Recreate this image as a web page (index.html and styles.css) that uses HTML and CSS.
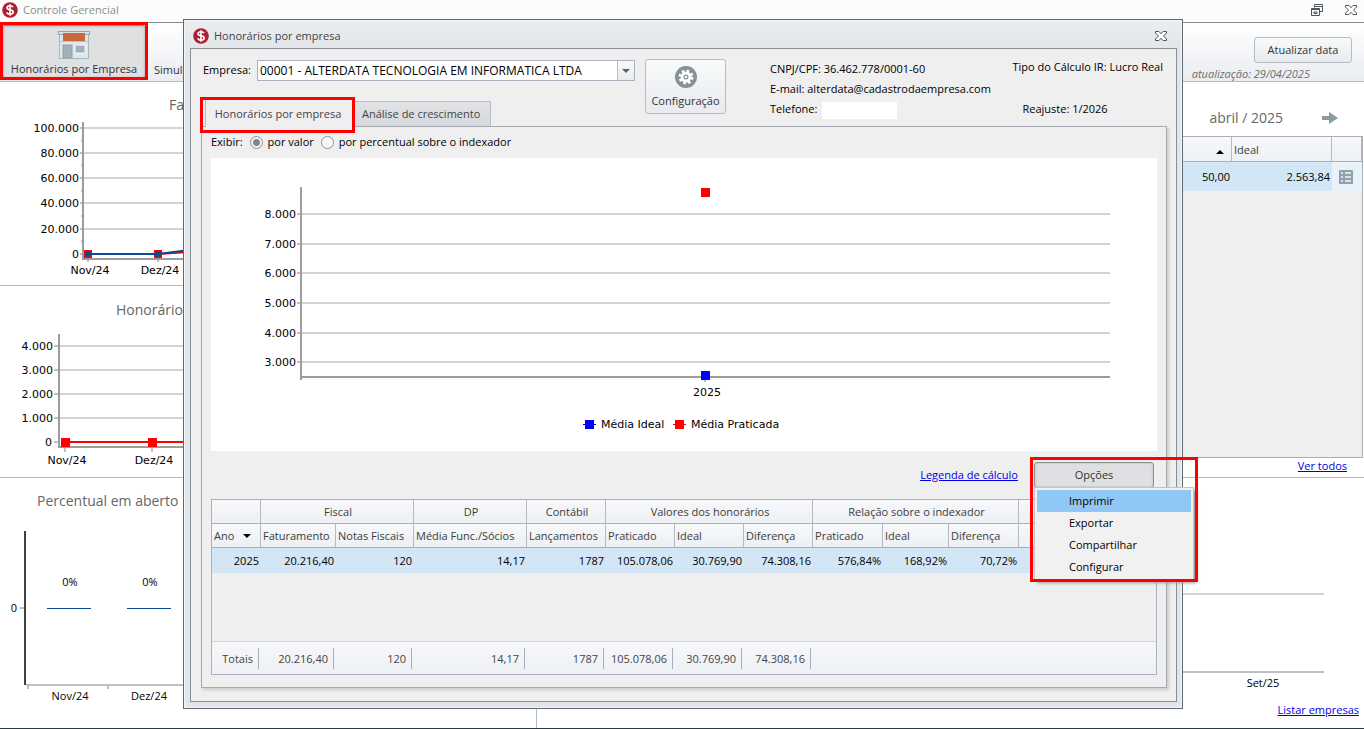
FILE: index.html
```html
<!DOCTYPE html>
<html lang="pt-BR">
<head>
    <meta charset="utf-8" />
    <title>Controle Gerencial</title>
    <link rel="stylesheet" href="styles.css">
</head>
<body>
    <!-- shared icon -->
    <svg class="defs" width="0" height="0">
        <symbol id="money" viewBox="0 0 16 16">
            <circle cx="8" cy="8" r="7.8" fill="#b01e33" />
            <path d="M11 5.2C10.5 4.1 9.500 3.700 8 3.700C6.200 3.700 5 4.500 5 5.800C5 8.700 11.200 7 11.200 10C11.200 11.500 9.800 12.200 8 12.200C6.300 12.200 5.200 11.600 4.700 10.400M8 2.200V13.800" fill="none" stroke="#fff" stroke-width="1.600" />
        </symbol>
        <symbol id="close" viewBox="0 0 12 12">
            <path d="M.5 1.500H4L6 3.700L8 1.500H11.500V3L8.500 6L11.500 9V10.500H8L6 8.300L4 10.500H.5V9L3.500 6L.5 3Z" fill="#fff" stroke="#4e565c" />
        </symbol>
    </svg>

    <div class="app">
        <header class="titlebar">
            <svg class="logo"><use href="#money" /></svg>
            <span>Controle Gerencial</span>
            <div class="winbtns">
                <button type="button" aria-label="Restaurar">
                    <svg width="12" height="12" viewBox="0 0 12 12"><path d="M3.500 3.500V.5H11.500V7.500H8.500M3.500 2.500H11M.5 4.500H8.500V11.500H.5ZM.5 5.500H8.500M3 8H6V9.500H3Z" fill="none" stroke="#4e565c" /></svg>
                </button>
                <button type="button" aria-label="Fechar"><svg width="12" height="12"><use href="#close" /></svg></button>
            </div>
        </header>

        <nav class="toolbar">
            <button type="button" class="toolbtn active">
                <svg width="32" height="28" viewBox="0 0 32 28">
                    <rect x="1.500" y="3" width="29" height="24.500" fill="#dfe8ec" stroke="#a9b8c0" />
                    <rect x=".5" y=".5" width="31" height="3" fill="#d9e2e6" stroke="#94a5ae" />
                    <rect x="5" y="2" width="22" height="8" fill="#c9683c" />
                    <path d="M1 10.500H31" stroke="#b3c1c8" />
                    <rect x="5" y="14" width="9" height="13" fill="#a3b1b9" stroke="#8fa0a9" />
                    <rect x="17" y="14" width="10" height="8" fill="#a3b1b9" stroke="#f4f8fa" />
                </svg>
                <span>Honorários por Empresa</span>
                <i class="mark"></i>
            </button>
            <button type="button" class="toolbtn">Simul</button>
            <div class="update">
                <button type="button" class="btn">Atualizar data</button>
                <em>atualização: 29/04/2025</em>
            </div>
        </nav>

        <main class="panels">
            <div class="left">
                <section class="panel billing">
                    <h2>Fa</h2>
                    <svg class="chart" width="300" height="160" viewBox="0 120 300 160">
                        <path class="grid" d="M84 128H300M84 153H300M84 178H300M84 203H300M84 229H300" />
                        <path class="tick" d="M80 128H84M80 153H84M80 178H84M80 203H84M80 229H84M80 254H84M81 140.500H84M81 165.500H84M81 190.500H84M81 216H84M81 241.500H84M88 259V262M158 259V262" />
                        <path class="axis" d="M83 122V259H300" />
                        <g class="ylabels">
                            <text x="79" y="132">100.000</text>
                            <text x="79" y="157">80.000</text>
                            <text x="79" y="182">60.000</text>
                            <text x="79" y="207">40.000</text>
                            <text x="79" y="233">20.000</text>
                            <text x="79" y="258">0</text>
                        </g>
                        <path d="M88 254H158L300 245" fill="none" stroke="#f00" stroke-width="2" />
                        <path d="M84 250H92V258H84ZM154 250H162V258H154Z" fill="#f00" />
                        <path d="M88 254H158L300 236" fill="none" stroke="#084d92" stroke-width="2" />
                        <circle cx="88" cy="254" r="3" fill="#084d92" />
                        <circle cx="158" cy="254" r="3" fill="#084d92" />
                        <g class="xlabels">
                            <text x="90" y="274">Nov/24</text>
                            <text x="160" y="274">Dez/24</text>
                        </g>
                    </svg>
                </section>
                <section class="panel fees">
                    <h2>Honorário</h2>
                    <svg class="chart" width="300" height="142" viewBox="0 330 300 142">
                        <path class="grid" d="M60 346H300M60 370H300M60 394H300M60 418H300" />
                        <path class="tick" d="M54 346H59M54 370H59M54 394H59M54 418H59M54 442H59M65 447V452M152 447V452" />
                        <path class="axis" d="M59 334V447H300" />
                        <g class="ylabels">
                            <text x="53" y="350">4.000</text>
                            <text x="53" y="374">3.000</text>
                            <text x="53" y="398">2.000</text>
                            <text x="53" y="422">1.000</text>
                            <text x="52" y="446">0</text>
                        </g>
                        <path d="M65 442H300" stroke="#f00" stroke-width="2" />
                        <path d="M61 438H70V447H61ZM148 438H157V447H148Z" fill="#f00" />
                        <g class="xlabels">
                            <text x="67" y="464">Nov/24</text>
                            <text x="154" y="464">Dez/24</text>
                        </g>
                    </svg>
                </section>
                <section class="panel open">
                    <h2>Percentual em aberto</h2>
                    <svg class="chart" width="300" height="190" viewBox="0 520 300 190">
                        <path d="M25 531V685" stroke="#404040" stroke-width="2" />
                        <path d="M26 685H300M28 686V689M108 686V689M20 608H24" stroke="#bfbfbf" stroke-width="2" />
                        <path d="M47 608.500H91M127 608.500H171" stroke="#084d92" />
                        <g class="values">
                            <text x="14" y="612">0</text>
                            <text x="70" y="586">0%</text>
                            <text x="150" y="586">0%</text>
                            <text x="70" y="700">Nov/24</text>
                            <text x="149" y="700">Dez/24</text>
                        </g>
                    </svg>
                </section>
            </div>

            <div class="right">
                <section class="month">
                    <div class="monthnav">
                        <h2>abril / 2025</h2>
                        <button type="button" aria-label="Próximo mês">
                            <svg width="18" height="14" viewBox="0 0 18 14"><path d="M1 5H8V1L17 7L8 13V9H1Z" fill="#8a9ba1" /></svg>
                        </button>
                    </div>
                    <div class="monthgrid">
                        <table>
                            <colgroup><col><col class="c100"><col class="c30"></colgroup>
                            <thead>
                                <tr><th class="sort"><i class="up"></i></th><th>Ideal</th><th></th></tr>
                            </thead>
                            <tbody>
                                <tr>
                                    <td>50,00</td>
                                    <td>2.563,84</td>
                                    <td class="act">
                                        <button type="button" aria-label="Detalhes">
                                            <svg width="14" height="14" viewBox="0 0 14 14"><rect width="14" height="14" rx="1" fill="#8fa1ab" /><path d="M2 3H4M2 7H4M2 11H4M6 3H12M6 7H12M6 11H12" stroke="#f4f8fb" stroke-width="1.500" /></svg>
                                        </button>
                                    </td>
                                </tr>
                            </tbody>
                        </table>
                    </div>
                    <a href="#" class="all">Ver todos</a>
                </section>
                <section class="forecast">
                    <svg class="chart" width="200" height="120" viewBox="1164 580 200 120">
                        <path d="M1164 594H1324" stroke="#d3d3d3" stroke-width="2" />
                        <path d="M1164 672H1324" stroke="#bfbfbf" stroke-width="2" />
                        <g class="values"><text x="1263" y="687">Set/25</text></g>
                    </svg>
                    <a href="#" class="list">Listar empresas</a>
                </section>
            </div>
        </main>
    </div>

    <!-- window: Honorários por empresa -->
    <div class="dialog" role="dialog" aria-labelledby="dlgtitle">
        <header class="dlghead">
            <svg class="logo"><use href="#money" /></svg>
            <span id="dlgtitle">Honorários por empresa</span>
            <button type="button" aria-label="Fechar"><svg width="12" height="12"><use href="#close" /></svg></button>
        </header>
        <div class="dlgbody">
            <div class="company">
                <label for="empresa">Empresa:</label>
                <div class="combo">
                    <select id="empresa"><option>00001 - ALTERDATA TECNOLOGIA EM INFORMATICA LTDA</option></select>
                    <span class="arrow"><i class="down"></i></span>
                </div>
                <button type="button" class="btn config">
                    <svg width="22" height="22" viewBox="0 0 22 22">
                        <circle cx="11" cy="11" r="11" fill="#829299" />
                        <circle cx="11" cy="11" r="6" fill="none" stroke="#fff" stroke-width="3" stroke-dasharray="2.400 2.312" />
                        <circle cx="11" cy="11" r="4" fill="none" stroke="#fff" stroke-width="3" />
                        <circle cx="11" cy="11" r="1.200" fill="#fff" />
                    </svg>
                    <span>Configuração</span>
                </button>
                <div class="contact">
                    <p>CNPJ/CPF: 36.462.778/0001-60</p>
                    <p>E-mail: alterdata@cadastrodaempresa.com</p>
                    <p>Telefone: <span class="blank"></span></p>
                </div>
                <div class="tax">
                    <p>Tipo do Cálculo IR: Lucro Real</p>
                    <p class="adjust">Reajuste: 1/2026</p>
                </div>
            </div>

            <div class="tabs" role="tablist">
                <button type="button" role="tab" class="tab selected" aria-selected="true">Honorários por empresa<i class="mark"></i></button>
                <button type="button" role="tab" class="tab">Análise de crescimento</button>
            </div>

            <div class="page">
                <div class="show">
                    <span>Exibir:</span>
                    <input type="radio" name="exibir" id="valor" checked><label for="valor">por valor</label>
                    <input type="radio" name="exibir" id="perc"><label for="perc">por percentual sobre o indexador</label>
                </div>

                <svg class="mainchart" viewBox="211 158 946 293">
                    <path class="grid" d="M302 214H1110M302 244H1110M302 273H1110M302 303H1110M302 333H1110M302 362H1110" />
                    <path class="tick" d="M297 214H301M297 244H301M297 273H301M297 303H301M297 333H301M297 362H301M705 378V382" />
                    <path class="axis" d="M301 187V380M301 377H1110" />
                    <g class="ylabels">
                        <text x="296" y="218">8.000</text>
                        <text x="296" y="248">7.000</text>
                        <text x="296" y="277">6.000</text>
                        <text x="296" y="307">5.000</text>
                        <text x="296" y="337">4.000</text>
                        <text x="296" y="366">3.000</text>
                    </g>
                    <rect x="701" y="188" width="9" height="9" fill="#f00" />
                    <rect x="701" y="371" width="9" height="9" fill="#00f" />
                    <g class="xlabels"><text x="707" y="396">2025</text></g>
                    <path d="M583 424.500H596" stroke="#00f" />
                    <rect x="585" y="420" width="9" height="9" fill="#00f" />
                    <text x="601" y="428">Média Ideal</text>
                    <path d="M673 424.500H686" stroke="#f00" />
                    <rect x="675" y="420" width="9" height="9" fill="#f00" />
                    <text x="691" y="428">Média Praticada</text>
                </svg>

                <div class="actions">
                    <a href="#">Legenda de cálculo</a>
                    <div class="options">
                        <button type="button" class="btn pressed" aria-expanded="true">Opções</button>
                        <div class="menu" role="menu">
                            <button type="button" role="menuitem" class="hover">Imprimir</button>
                            <button type="button" role="menuitem">Exportar</button>
                            <button type="button" role="menuitem">Compartilhar</button>
                            <button type="button" role="menuitem">Configurar</button>
                        </div>
                        <i class="mark"></i>
                    </div>
                </div>

                <table class="fees-table">
                    <colgroup>
                        <col class="c49"><col class="c75"><col class="c78"><col class="c113"><col class="c79">
                        <col class="c69"><col class="c69"><col class="c69"><col class="c70"><col class="c66"><col class="c70"><col>
                    </colgroup>
                    <thead>
                        <tr class="groups">
                            <th></th><th colspan="2">Fiscal</th><th>DP</th><th>Contábil</th>
                            <th colspan="3">Valores dos honorários</th><th colspan="3">Relação sobre o indexador</th><th></th>
                        </tr>
                        <tr>
                            <th>Ano <i class="down big"></i></th><th>Faturamento</th><th>Notas Fiscais</th><th>Média Func./Sócios</th><th>Lançamentos</th>
                            <th>Praticado</th><th>Ideal</th><th>Diferença</th><th>Praticado</th><th>Ideal</th><th>Diferença</th><th></th>
                        </tr>
                    </thead>
                    <tbody>
                        <tr>
                            <td>2025</td><td>20.216,40</td><td>120</td><td>14,17</td><td>1787</td>
                            <td>105.078,06</td><td>30.769,90</td><td>74.308,16</td><td>576,84%</td><td>168,92%</td><td>70,72%</td><td></td>
                        </tr>
                        <tr class="empty"><td colspan="12"></td></tr>
                    </tbody>
                    <tfoot>
                        <tr>
                            <td><span>Totais</span></td><td><span>20.216,40</span></td><td><span>120</span></td><td><span>14,17</span></td><td><span>1787</span></td>
                            <td><span>105.078,06</span></td><td><span>30.769,90</span></td><td><span>74.308,16</span></td><td colspan="4"></td>
                        </tr>
                    </tfoot>
                </table>
            </div>
        </div>
    </div>
</body>
</html>
```

FILE: styles.css
```css
*{
    padding:0;
    margin:0;
    box-sizing:border-box;
}
body{
    position:relative;
    font:11px/16px "Open Sans", "Noto Sans", sans-serif;
    color:#000;
    background-color:#fff;
}
button, select{
    font:inherit;
    color:#333;
    background:none;
    border:none;
}
svg{
    display:block;
}
a{
    color:#0000e6;
}
h2{
    font-weight:normal;
    font-size:14px;
    line-height:20px;
    color:#666;
}
table{
    width:100%;
    table-layout:fixed;
    border-spacing:0;
}
th{
    font-weight:normal;
    text-align:left;
    color:#3c3c3c;
    white-space:nowrap;
    background:linear-gradient(#f7f8fa, #edf0f4);
    border-right:1px solid #b4bac3;
    border-bottom:1px solid #a9afb9;
}
td{
    text-align:right;
    white-space:nowrap;
}
.defs{
    position:absolute;
}
.logo{
    width:16px;
    height:16px;
}

/* red frames drawn over the controls */
.mark{
    position:absolute;
    border:3px solid #f00;
    pointer-events:none;
}

/* small triangles */
.up, .down{
    display:inline-block;
    border:4px solid transparent;
}
.up{
    border-top:none;
    border-bottom-color:#000;
}
.down{
    border-bottom:none;
    border-top-color:#5a636b;
}
.down.big{
    border-top-color:#000;
    margin:0 0 2px 6px;
}

.btn{
    height:26px;
    color:#333;
    background:linear-gradient(#f8fafb, #e8ebef);
    border:1px solid #b6bcc6;
    border-radius:3px;
}
.btn.pressed{
    display:block;
    width:120px;
    background:#dfe0e2;
    border-color:#8b9097;
    box-shadow:inset 0 0 2px #a0a4a9;
}

/* main window */
.app{
    display:flex;
    flex-direction:column;
    min-height:100vh;
    border-bottom:1px solid #2b3a42;
}
.titlebar{
    display:flex;
    align-items:center;
    gap:5px;
    height:23px;
    padding:0 7px 3px 2px;
    color:#8c8c8c;
    background-color:#fcfcfc;
    border-bottom:1px solid #868c93;
}
.winbtns{
    display:flex;
    gap:22px;
    margin-left:auto;
}
.toolbar{
    display:flex;
    height:59px;
    padding:2px 12px 2px 2px;
    background:linear-gradient(#fff, #e9ecf1);
    border-bottom:1px solid #b4b9c2;
}
.toolbtn{
    position:relative;
    display:flex;
    flex-direction:column;
    justify-content:flex-end;
    align-items:center;
    gap:2px;
    padding:0 8px 1px;
    white-space:nowrap;
}
.toolbtn.active{
    width:144px;
    background-color:#dfe0e2;
    border:1px solid #8b9097;
    border-radius:3px;
    box-shadow:inset 0 0 3px #a0a4a9;
}
.toolbtn .mark{
    inset:-4px -3px -2px -3px;
}
.update{
    display:flex;
    flex-direction:column;
    align-items:flex-end;
    gap:3px;
    margin-left:auto;
    padding-top:12px;
    color:#6e6e6e;
}
.update .btn{
    width:98px;
    flex-shrink:0;
}
.update em{
    padding-right:42px;
}
.panels{
    display:flex;
    flex:1;
}
.left{
    display:flex;
    flex-direction:column;
    width:537px;
    border-right:1px solid #b4b9c2;
}
.right{
    display:flex;
    flex-direction:column;
    flex:1;
}
.panel{
    padding-top:13px;
    border-bottom:1px solid #b4b9c2;
}
.panel:last-child{
    border-bottom:none;
}
.billing{
    height:204px;
}
.billing h2{
    padding-left:169px;
}
.billing .chart{
    margin-top:5px;
}
.fees{
    height:192px;
    padding-top:14px;
}
.fees h2{
    padding-left:116px;
}
.fees .chart{
    margin-top:10px;
}
.open h2{
    padding-left:37px;
}
.open .chart{
    margin-top:9px;
}

/* charts */
.chart, .mainchart{
    font:11px "DejaVu Sans", Verdana, sans-serif;
}
.grid{
    stroke:#d3d3d3;
    stroke-width:2px;
}
.tick{
    stroke:#bfbfbf;
    stroke-width:2px;
}
.axis{
    fill:none;
    stroke:#9c9c9c;
    stroke-width:2px;
}
.ylabels{
    text-anchor:end;
}
.xlabels, .values{
    text-anchor:middle;
}
.values{
    font:11px "Open Sans", "Noto Sans", sans-serif;
}

/* month panel */
.month{
    display:flex;
    flex-direction:column;
    height:396px;
    border-bottom:1px solid #b4b9c2;
}
.monthnav{
    display:flex;
    justify-content:flex-end;
    align-items:center;
    gap:38px;
    height:54px;
    padding:17px 25px 0 0;
}
.monthgrid{
    height:322px;
    margin-right:1px;
    background-color:#efefef;
    border:1px solid #a9afb9;
}
.monthgrid th{
    height:25px;
    padding:1px 0 0 2px;
}
.monthgrid .sort{
    text-align:right;
    padding-right:7px;
    line-height:10px;
}
.monthgrid td{
    height:29px;
    padding-right:2px;
    background-color:#d3e6f5;
}
.monthgrid .act{
    background-color:#eaf2f9;
}
.act button{
    display:block;
    margin:0 auto;
}
.all{
    align-self:flex-end;
    margin-right:17px;
}
.forecast{
    display:flex;
    flex:1;
    flex-direction:column;
    align-items:flex-end;
    padding-top:102px;
}
.list{
    margin:2px 5px 0 0;
}

/* dialog */
.dialog{
    position:absolute;
    top:19px;
    left:183px;
    right:181px;
    padding:0 5px 6px 6px;
    background:linear-gradient(#ebedf0, #e2e6e9 30px);
    border:1px solid #60676f;
    box-shadow:inset 0 0 0 1px #f3f5f6;
}
.dlghead{
    display:flex;
    align-items:center;
    gap:5px;
    height:28px;
    padding:4px 10px 0 3px;
    color:#444;
}
.dlghead button{
    margin-left:auto;
}
.dlgbody{
    padding:10px 9px 13px 10px;
    background-color:#efefef;
    border:1px solid #888e96;
}
.company{
    display:flex;
    align-items:flex-start;
    height:57px;
    white-space:nowrap;
}
.company label{
    flex-shrink:0;
    width:56px;
    padding:3px 0 0 2px;
}
.combo{
    position:relative;
    flex-shrink:0;
    width:378px;
    margin-top:1px;
}
.combo select{
    display:block;
    width:100%;
    height:21px;
    padding:0 20px 0 2px;
    font-size:12px;
    color:#000;
    background-color:#fff;
    border:1px solid #aab0bd;
    appearance:none;
}
.combo .arrow{
    position:absolute;
    top:1px;
    right:1px;
    bottom:1px;
    width:17px;
    display:flex;
    justify-content:center;
    align-items:center;
    background:linear-gradient(#f8fafb, #e8ebef);
    border-left:1px solid #b6bcc6;
    pointer-events:none;
}
.config{
    display:flex;
    flex-direction:column;
    flex-shrink:0;
    align-items:center;
    gap:5px;
    width:81px;
    height:55px;
    margin-left:10px;
    padding-top:6px;
}
.contact{
    margin-left:44px;
    line-height:20px;
}
.tax{
    display:flex;
    flex-direction:column;
    gap:26px;
    margin-left:auto;
    padding-right:4px;
}
.tax .adjust{
    padding-left:10px;
}
.blank{
    display:inline-block;
    width:75px;
    height:17px;
    margin-left:2px;
    vertical-align:middle;
    background-color:#fff;
}
.tabs{
    display:flex;
    align-items:flex-end;
    height:10px;
    padding-left:4px;
}
.tab{
    position:relative;
    height:25px;
    padding:0 10px 0 8px;
    color:#444;
    white-space:nowrap;
    background:linear-gradient(#e0e2e6, #d6d9dd);
    border:1px solid #b6bcc6;
    border-bottom:none;
}
.tab.selected{
    z-index:1;
    height:28px;
    width:148px;
    margin-bottom:-1px;
    background:#efefef;
}
.tab .mark{
    inset:-3px -3px -6px -6px;
}
.page{
    padding:7px 9px 12px;
    border:1px solid #a6abb5;
    box-shadow:2px 2px 3px #c8cacd;
}
.show{
    display:flex;
    align-items:center;
    height:16px;
}
.show input{
    width:13px;
    height:13px;
    margin:0 5px 0 7px;
    border:1px solid #8c9299;
    border-radius:50%;
    background:#f7f7f7;
    appearance:none;
}
.show input:checked{
    background:radial-gradient(#81878d 0 3px, #f3f3f3 4px);
}
.mainchart{
    width:100%;
    margin-top:8px;
    background-color:#fff;
}
.actions{
    display:flex;
    justify-content:flex-end;
    align-items:center;
    gap:16px;
    height:48px;
    padding-right:3px;
}
.options{
    position:relative;
}
.options .mark{
    top:-5px;
    left:-4px;
    width:168px;
    height:125px;
}
.menu{
    position:absolute;
    top:25px;
    left:0;
    width:160px;
    height:93px;
    padding:2px;
    background-color:#f1f1f1;
    border:1px solid #c4c4c4;
    box-shadow:3px 3px 3px #9a9a9a;
}
.menu button{
    display:block;
    width:100%;
    height:22px;
    padding-left:32px;
    color:#000;
    text-align:left;
}
.menu .hover{
    background-color:#91c7f5;
}

/* fees table */
.fees-table{
    border:1px solid #aab0bd;
}
.fees-table th{
    height:24px;
    padding:1px 0 0 2px;
}
.fees-table th:last-child{
    border-right:none;
}
.fees-table .groups th{
    text-align:center;
}
.fees-table tbody td{
    height:25px;
    padding:1px 2px 0 0;
    background-color:#d3e6f5;
}
.fees-table .empty td{
    height:68px;
    background:none;
}
.fees-table tfoot td{
    height:33px;
    padding-right:2px;
    color:#444;
    background:linear-gradient(#f6f7f9, #eef1f5);
    border-top:1px solid #d4d8dd;
}
.fees-table tfoot span{
    display:block;
    height:21px;
    padding-right:5px;
    line-height:21px;
    border-right:1px solid #a9afb9;
}
.c30{ width:30px; }
.c49{ width:49px; }
.c66{ width:66px; }
.c69{ width:69px; }
.c70{ width:70px; }
.c75{ width:75px; }
.c78{ width:78px; }
.c79{ width:79px; }
.c100{ width:100px; }
.c113{ width:113px; }
```
